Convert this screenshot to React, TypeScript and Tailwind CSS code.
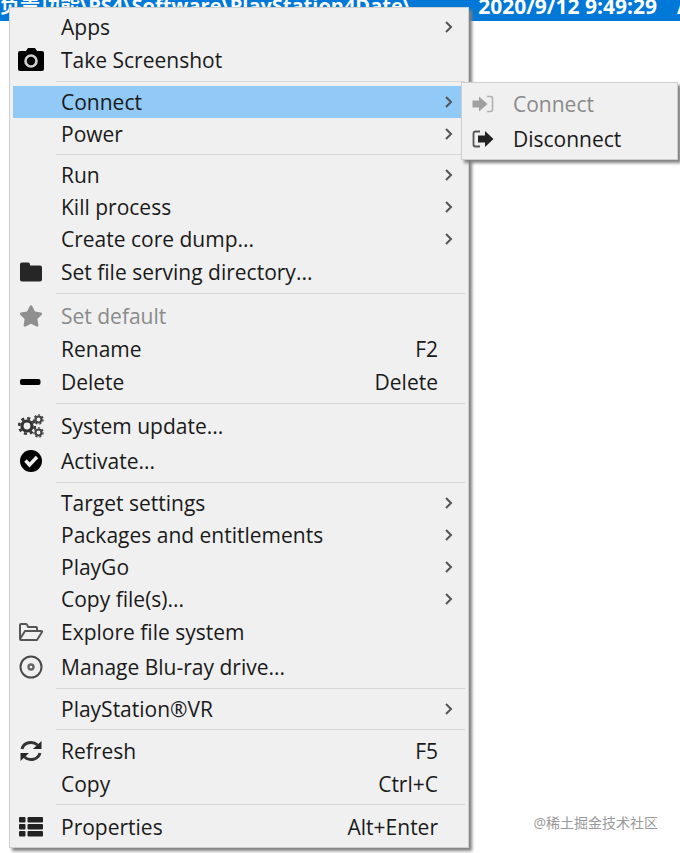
import { FaStar } from 'react-icons/fa';
import clsx from 'clsx';
import type { ReactNode } from 'react';

type Item = {
  label: string;
  icon?: ReactNode;
  shortcut?: string;
  submenu?: boolean;
  active?: boolean;
  disabled?: boolean;
  tall?: boolean;
};

const CameraIcon = () => (
  <svg viewBox="0 0 28 26" className="w-7 h-[26px] text-black">
    <path d="M3 4h6l2-3h7l2 3h5q2 0 2 2v16q0 2-2 2H3q-2 0-2-2V6q0-2 2-2z" fill="currentColor" />
    <circle cx="14" cy="14" r="5.5" fill="none" stroke="#d0d0d0" strokeWidth="2.6" />
  </svg>
);

const FolderIcon = () => (
  <svg viewBox="0 0 24 20" className="w-6 h-5" fill="#262626">
    <path d="M3 0.500h6q2 0 2 2V3.500h10q2 0 2 2v12q0 2-2 2H3q-2 0-2-2v-15q0-2 2-2z" />
  </svg>
);

const MinusIcon = () => (
  <svg viewBox="0 0 24 8" className="w-6 h-2" fill="#000">
    <rect x="1" y="1" width="20.500" height="6" rx="2" />
  </svg>
);

const GearsIcon = () => (
  <svg viewBox="0 0 26 24" className="w-[26px] h-6" fill="none" stroke="#333">
    <circle cx="9" cy="12" r="5" strokeWidth="3.200" />
    <circle cx="9" cy="12" r="7.800" strokeWidth="2.600" strokeDasharray="3.060 3.060" />
    <circle cx="20.500" cy="5.500" r="3" strokeWidth="2.200" stroke="#444" />
    <circle cx="20.500" cy="5.500" r="4.600" strokeWidth="1.300" strokeDasharray="2.060 2.060" stroke="#444" />
    <circle cx="20.500" cy="18.500" r="3" strokeWidth="2.200" stroke="#444" />
    <circle cx="20.500" cy="18.500" r="4.600" strokeWidth="1.300" strokeDasharray="2.060 2.060" stroke="#444" />
  </svg>
);

const CheckIcon = () => (
  <svg viewBox="0 0 24 24" className="size-6">
    <circle cx="12" cy="12" r="11" fill="#000" />
    <path d="M6.500 11.500l4 4.500 7.500-8" fill="none" stroke="#f0f0f0" strokeWidth="3.400" />
  </svg>
);

const FolderOpenIcon = () => (
  <svg viewBox="0 0 26 20" className="w-[26px] h-5" fill="none" stroke="#555" strokeWidth="2" strokeLinejoin="round">
    <path d="M2 17V3q0-1 1-1h5q1 0 2 3h8q1 0 1 1v3" />
    <path d="M2 17l5-8h16q1.500 0 1 1l-5 8H3q-1 0-1-1z" />
  </svg>
);

const DiscIcon = () => (
  <svg viewBox="0 0 24 24" className="size-6" fill="none" stroke="#4a4a4a">
    <circle cx="12" cy="12" r="10.500" strokeWidth="2" />
    <circle cx="12" cy="12" r="2.500" strokeWidth="2.400" stroke="#666" />
  </svg>
);

const RefreshIcon = () => (
  <svg viewBox="0 0 24 24" className="size-6" fill="none" stroke="#333" strokeWidth="3">
    <path d="M3 10a9.200 8.500 0 0 1 15.500-4" />
    <path d="M21 14a9.200 8.500 0 0 1-15.500 4" />
    <path d="M22.500 2v8H14z" fill="#262626" stroke="none" />
    <path d="M1.500 22V14H10z" fill="#262626" stroke="none" />
  </svg>
);

const ListIcon = () => (
  <svg viewBox="0 0 24 20" className="w-6 h-5" fill="#222">
    {[0, 7, 14].map((y) => (
      <g key={y}>
        <rect x="0" y={y} width="6.500" height="5.500" rx="1" />
        <rect x="8.500" y={y} width="15.500" height="5.500" rx="1" />
      </g>
    ))}
  </svg>
);

const SignInIcon = () => (
  <svg viewBox="0 0 22 18" className="w-[22px] h-[18px]" fill="#a0a0a0">
    <path d="M0.500 5.500H7V1.500l8.500 7.500L7 16.500v-4H0.500z" />
    <path d="M15 1.500h3.500q2 0 2 2v11q0 2-2 2H15" fill="none" stroke="#b0b0b0" strokeWidth="1.600" />
  </svg>
);

const SignOutIcon = () => (
  <svg viewBox="0 0 22 18" className="w-[22px] h-[18px]" fill="#222">
    <path d="M6 5.500h7V1L21.500 9 13 17v-4.500H6z" />
    <path d="M8 1.500H3.500q-2 0-2 2v11q0 2 2 2H8" fill="none" stroke="#555" strokeWidth="1.800" />
  </svg>
);

const groups: Item[][] = [
  [
    { label: 'Apps', submenu: true },
    { label: 'Take Screenshot', icon: <CameraIcon /> },
  ],
  [
    { label: 'Connect', submenu: true, active: true },
    { label: 'Power', submenu: true },
  ],
  [
    { label: 'Run', submenu: true },
    { label: 'Kill process', submenu: true },
    { label: 'Create core dump...', submenu: true },
    { label: 'Set file serving directory...', icon: <FolderIcon /> },
  ],
  [
    { label: 'Set default', icon: <FaStar className="size-6 text-[#8f8f8f]" />, disabled: true, tall: true },
    { label: 'Rename', shortcut: 'F2' },
    { label: 'Delete', icon: <MinusIcon />, shortcut: 'Delete' },
  ],
  [
    { label: 'System update...', icon: <GearsIcon />, tall: true },
    { label: 'Activate...', icon: <CheckIcon />, tall: true },
  ],
  [
    { label: 'Target settings', submenu: true },
    { label: 'Packages and entitlements', submenu: true },
    { label: 'PlayGo', submenu: true },
    { label: 'Copy file(s)...', submenu: true },
    { label: 'Explore file system', icon: <FolderOpenIcon /> },
    { label: 'Manage Blu-ray drive...', icon: <DiscIcon />, tall: true },
  ],
  [{ label: 'PlayStation®VR', submenu: true }],
  [
    { label: 'Refresh', icon: <RefreshIcon />, shortcut: 'F5' },
    { label: 'Copy', shortcut: 'Ctrl+C' },
  ],
  [{ label: 'Properties', icon: <ListIcon />, shortcut: 'Alt+Enter', tall: true }],
];

const connectItems: Item[] = [
  { label: 'Connect', icon: <SignInIcon />, disabled: true, tall: true },
  { label: 'Disconnect', icon: <SignOutIcon />, tall: true },
];

function MenuItem({ item }: { item: Item }) {
  return (
    <button
      type="button"
      role="menuitem"
      disabled={item.disabled}
      className={clsx(
        'flex w-full items-center pr-[7px] text-left',
        item.tall ? 'h-[35px]' : item.icon ? 'h-[34px]' : 'h-8',
        item.active && 'bg-[#91c9f7]',
        item.disabled ? 'text-[#8a8a8a]' : 'text-[#1a1a1a]',
      )}
    >
      <span className="flex w-9 shrink-0 justify-center">{item.icon}</span>
      <span className="ml-3 grow whitespace-nowrap">{item.label}</span>
      {item.shortcut && <span className="mr-5">{item.shortcut}</span>}
      {item.submenu && (
        <svg viewBox="0 0 10 14" className="mr-1 h-3.5 w-2.5" fill="none" stroke="#555" strokeWidth="2">
          <path d="M2 2l5 5-5 5" />
        </svg>
      )}
    </button>
  );
}

export default function App() {
  return (
    <div className="relative min-h-screen overflow-hidden bg-white font-['Open_Sans','Noto_Sans_CJK_SC',sans-serif] text-[21px] leading-7">
      <div className="flex h-[21px] items-end overflow-hidden bg-[#0078d7] pb-px font-bold whitespace-nowrap text-white">
        <span className="grow text-[20px]">负责功能\PS4\Software\PlayStation4Date\</span>
        <span>2020/9/12 9:49:29</span>
        <span className="ml-5 w-[3px]">A</span>
      </div>

      <div
        role="menu"
        className="absolute left-[9px] top-[7px] w-[460px] border border-[#cfcfcf] bg-[#f0f0f0] p-[3px] shadow-[3px_3px_3px_#808080]"
      >
        {groups.map((group, index) => (
          <div key={index}>
            {index > 0 && <hr className="my-1 ml-[43px] border-[#d7d7d7]" />}
            {group.map((item) => (
              <MenuItem key={item.label} item={item} />
            ))}
          </div>
        ))}
      </div>

      {/* Connect submenu */}
      <div
        role="menu"
        className="absolute left-[461px] top-[82px] w-[217px] border border-[#cfcfcf] bg-[#f0f0f0] p-[3px] shadow-[3px_3px_3px_#808080]"
      >
        {connectItems.map((item) => (
          <MenuItem key={item.label} item={item} />
        ))}
      </div>

      <p className="absolute right-[22px] bottom-4 text-[14px] text-[#999]">@稀土掘金技术社区</p>
    </div>
  );
}
